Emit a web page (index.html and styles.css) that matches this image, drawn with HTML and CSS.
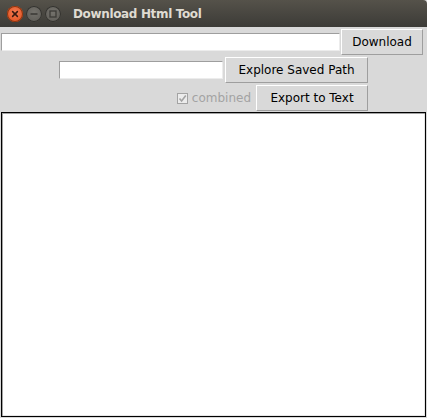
FILE: index.html
```html
<!DOCTYPE html>
<html>
<head>
<meta charset="utf-8">
<link rel="stylesheet" href="styles.css">
</head>
<body>
<div class="window">
  <div class="titlebar">
    <div class="controls">
      <span class="ctl close">
        <svg width="14" height="14" viewBox="0 0 14 14"><path d="M4.6 4.6 L9.4 9.4 M9.4 4.6 L4.6 9.4" stroke="#3a1a10" stroke-width="1.5" stroke-linecap="round"/></svg>
      </span>
      <span class="ctl">
        <svg width="16" height="16" viewBox="0 0 16 16"><path d="M4.5 8 H11.5" stroke="#3c3b37" stroke-width="1.6"/></svg>
      </span>
      <span class="ctl">
        <svg width="16" height="16" viewBox="0 0 16 16"><rect x="5" y="5" width="6" height="6" fill="none" stroke="#3c3b37" stroke-width="1.3"/></svg>
      </span>
    </div>
    <div class="title">Download Html Tool</div>
  </div>
  <div class="content">
    <div class="row row1">
      <div class="entry url"></div>
      <div class="button btn-download">Download</div>
    </div>
    <div class="row row2">
      <div class="entry path"></div>
      <div class="button btn-explore">Explore Saved Path</div>
    </div>
    <div class="row row3">
      <div class="check">
        <span class="box">
          <svg width="9" height="9" viewBox="0 0 9 9"><path d="M1.5 4.5 L3.6 7 L7.8 1.6" fill="none" stroke="#a3a3a3" stroke-width="1.6"/></svg>
        </span>
        <span class="check-label">combined</span>
      </div>
      <div class="button btn-export">Export to Text</div>
    </div>
    <div class="textarea"></div>
  </div>
</div>
</body>
</html>
```
FILE: styles.css
```css
html, body {
  margin: 0;
  padding: 0;
  background: #d9d9d9;
}
body {
  width: 427px;
  height: 418px;
  overflow: hidden;
  font-family: "DejaVu Sans", sans-serif;
  font-size: 12px;
}
.window {
  display: flex;
  flex-direction: column;
  height: 418px;
}
.titlebar {
  height: 27px;
  background: linear-gradient(#55524a, #3c3b37);
  border-top-right-radius: 4px;
  display: flex;
  align-items: center;
  flex-shrink: 0;
}
.controls {
  display: flex;
  align-items: center;
  margin-left: 7px;
  gap: 3px;
}
.ctl {
  width: 16px;
  height: 16px;
  border-radius: 50%;
  background: radial-gradient(circle at 50% 40%, #74726c, #5a5853);
  box-shadow: inset 0 0 0 1px #33322e;
  display: flex;
  align-items: center;
  justify-content: center;
}
.ctl.close {
  background: radial-gradient(circle at 50% 40%, #f37a52, #df4b17);
  box-shadow: inset 0 0 0 1px #8a3510;
}
.title {
  margin-left: 12px;
  color: #dfdbd2;
  font-weight: bold;
  font-size: 12px;
  letter-spacing: -0.35px;
}
.content {
  flex: 1;
  display: flex;
  flex-direction: column;
  gap: 2px;
  padding-top: 2px;
  background: #d9d9d9;
}
.row {
  height: 26px;
  display: flex;
  align-items: center;
  flex-shrink: 0;
}
.row1 {
  padding-left: 1px;
  gap: 1px;
}
.row2, .row3 {
  justify-content: flex-end;
  padding-right: 59px;
  gap: 2px;
}
.entry {
  height: 18px;
  box-sizing: border-box;
  background: #ffffff;
  border-top: 1px solid #9e9e9e;
  border-left: 1px solid #9e9e9e;
  border-bottom: 1px solid #ececec;
  border-right: 1px solid #ececec;
}
.entry.url { width: 339px; }
.entry.path { width: 164px; }
.button {
  height: 26px;
  box-sizing: border-box;
  background: #d9d9d9;
  border-top: 1px solid #ffffff;
  border-left: 1px solid #ffffff;
  border-bottom: 1px solid #9e9e9e;
  border-right: 1px solid #9e9e9e;
  color: #000000;
  display: flex;
  align-items: center;
  justify-content: center;
}
.btn-download { width: 82px; }
.btn-explore { width: 143px; }
.btn-export { width: 112px; margin-left: 3px; }
.check {
  display: flex;
  align-items: center;
  gap: 4px;
}
.box {
  width: 11px;
  height: 11px;
  box-sizing: border-box;
  border: 1px solid #a3a3a3;
  background: #ececec;
  display: flex;
  align-items: center;
  justify-content: center;
}
.check-label {
  color: #a3a3a3;
}
.textarea {
  margin: -1px 1px 1px 1px;
  flex: 1;
  background: #ffffff;
  border: 1px solid #000000;
  box-shadow: inset 1px 1px 0 #a3a3a3, inset -1px -1px 0 #e6e6e6;
}
```
